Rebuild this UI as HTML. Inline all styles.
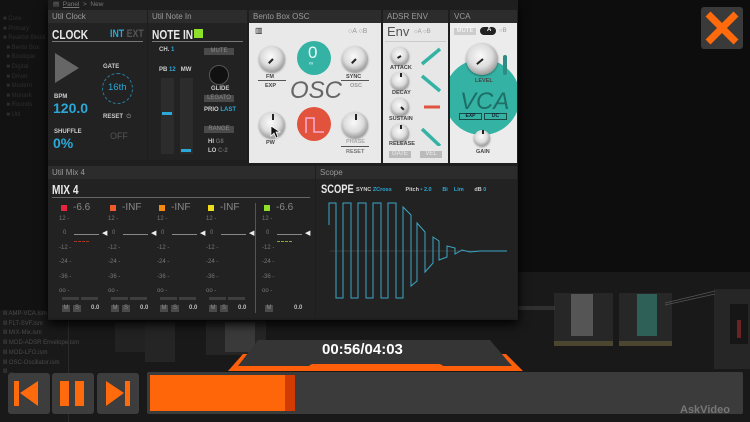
<!DOCTYPE html>
<html><head><meta charset="utf-8"><style>
*{margin:0;padding:0;box-sizing:border-box}
body{width:750px;height:422px;overflow:hidden;background:#0d0d0d;font-family:"Liberation Sans",sans-serif;position:relative}
.a{position:absolute}
.t{position:absolute;white-space:nowrap}
.hd{position:absolute;height:13px;background:#2c2c2c;color:#9a9a9a;font-size:8px;line-height:13px;padding-left:4px}
.dk{background:#222}
.w{color:#e8e8e8;font-weight:bold;transform:scaleX(.78);transform-origin:0 0}
.bl{color:#2aa8d8;font-weight:bold}
.sm{font-size:6px;font-weight:bold;color:#ccc}
.btn{position:absolute;background:#4a4a4a;color:#888;font-size:6px;text-align:center;line-height:7px}
.knob{position:absolute;border-radius:50%;background:radial-gradient(circle at 45% 40%,#fafafa 0,#ddd 45%,#999 75%,#777 100%);box-shadow:0 1px 2px #0006}
.knob i{position:absolute;left:50%;top:50%;width:2px;height:6px;background:#222;transform-origin:50% 0}
.lw{font-size:5.5px;font-weight:bold;color:#444;position:absolute;white-space:nowrap}
.mx{font-size:6px;color:#777;position:absolute}
</style></head><body>
<div class="a" style="left:0;top:272px;width:750px;height:150px;background:#191919"></div>
<div class="a" style="left:0;top:0;width:48px;height:310px;background:#121212"></div>
<div class="t" style="left:3px;top:15px;font-size:6px;color:#2e2e2e;line-height:9.6px">■ Core<br>■ Primary<br>■ Reaktor Block<br>&nbsp;&nbsp;■ Bento Box<br>&nbsp;&nbsp;■ Boutique<br>&nbsp;&nbsp;■ Digital<br>&nbsp;&nbsp;■ Driver<br>&nbsp;&nbsp;■ Modern<br>&nbsp;&nbsp;■ Monark<br>&nbsp;&nbsp;■ Rounds<br>&nbsp;&nbsp;■ Util</div>
<div class="t" style="left:3px;top:310px;font-size:6px;color:#4a4a4a;line-height:9.7px">Ⅲ AMP-VCA.ism<br>Ⅲ FLT-SVF.ism<br>Ⅲ MIX-Mix.ism<br>Ⅲ MOD-ADSR Envelope.ism<br>Ⅲ MOD-LFO.ism<br>Ⅲ OSC-Oscillator.ism<br>Ⅲ ...</div>
<div class="a" style="left:68px;top:300px;width:1px;height:122px;background:#2a2a2a"></div>
<div class="a" style="left:115px;top:322px;width:38px;height:30px;background:#222"></div>
<div class="a" style="left:145px;top:322px;width:30px;height:40px;background:#252525"></div>
<div class="a" style="left:206px;top:320px;width:60px;height:35px;background:#252525"></div>
<div class="a" style="left:225px;top:322px;width:30px;height:30px;background:#3a3a3a"></div>
<div class="a" style="left:554px;top:293px;width:59px;height:52px;background:#272727"></div>
<div class="a" style="left:571px;top:294px;width:22px;height:42px;background:#555"></div>
<div class="a" style="left:554px;top:341px;width:59px;height:5px;background:#4a4630"></div>
<div class="a" style="left:619px;top:293px;width:53px;height:52px;background:#272727"></div>
<div class="a" style="left:637px;top:294px;width:20px;height:42px;background:#2f6058"></div>
<div class="a" style="left:619px;top:341px;width:53px;height:5px;background:#4a4630"></div>
<div class="a" style="left:714px;top:289px;width:36px;height:80px;background:#262626"></div>
<div class="a" style="left:730px;top:304px;width:18px;height:40px;background:#161616"></div>
<div class="a" style="left:737px;top:320px;width:4px;height:18px;background:#6a2222"></div>
<svg class="a" style="left:515px;top:290px" width="210" height="30"><path d="M0 17 L40 17 M0 19 L40 19 M150 15 L200 4 M150 13 L200 1" stroke="#555" fill="none" stroke-width=".7"/></svg>

<div class="a" style="left:48px;top:0;width:470px;height:320px;background:#1e1e1e;box-shadow:0 4px 10px #000"></div>
<div class="t" style="left:53px;top:0;font-size:6.5px;color:#777">▤ &nbsp;<u>Panel</u> &nbsp;&gt;&nbsp; New</div>
<div class="hd" style="left:48px;top:10px;width:99px">Util Clock</div>
<div class="a dk" style="left:48px;top:23px;width:99px;height:137px"></div>
<div class="t w" style="left:52px;top:27px;font-size:13px">CLOCK</div>
<div class="t" style="left:110px;top:28px;font-size:11px;font-weight:bold;transform:scaleX(.8);transform-origin:0 0"><span style="color:#2aa8d8">INT</span> <span style="color:#555">EXT</span></div>
<div class="a" style="left:52px;top:41px;width:91px;height:1px;background:#777"></div>
<div class="a" style="left:55px;top:53px;width:0;height:0;border-left:24px solid #666;border-top:15px solid transparent;border-bottom:15px solid transparent"></div>
<div class="t sm" style="left:103px;top:64px">GATE</div>
<div class="a" style="left:102px;top:73px;width:31px;height:31px;border:1.5px dashed #2a7da0;border-radius:50%"></div>
<div class="t" style="left:108px;top:82px;font-size:9.5px;color:#2aa8d8">16th</div>
<div class="t sm" style="left:54px;top:94px">BPM</div>
<div class="t bl" style="left:53px;top:100px;font-size:14px">120.0</div>
<div class="t sm" style="left:103px;top:114px">RESET &nbsp;<span style="color:#777">⏻</span></div>
<div class="t sm" style="left:54px;top:129px">SHUFFLE</div>
<div class="t bl" style="left:53px;top:135px;font-size:14px">0%</div>
<div class="t" style="left:110px;top:131px;font-size:9px;color:#555">OFF</div>
<div class="hd" style="left:148px;top:10px;width:99px">Util Note In</div>
<div class="a dk" style="left:148px;top:23px;width:99px;height:137px"></div>
<div class="t w" style="left:152px;top:27px;font-size:13px">NOTE IN</div>
<div class="a" style="left:194px;top:29px;width:9px;height:9px;background:#8ee02a"></div>
<div class="a" style="left:152px;top:41px;width:91px;height:1px;background:#777"></div>
<div class="t sm" style="left:159px;top:47px">CH. <span style="color:#2aa8d8">1</span></div>
<div class="btn" style="left:204px;top:48px;width:30px">MUTE</div>
<div class="t sm" style="left:159px;top:67px">PB <span style="color:#2aa8d8">12</span> &nbsp; MW</div>
<div class="a" style="left:161px;top:78px;width:13px;height:76px;background:#2c2c2c"></div>
<div class="a" style="left:180px;top:78px;width:13px;height:76px;background:#2c2c2c"></div>
<div class="a" style="left:162px;top:112px;width:10px;height:3px;background:#2aa8d8"></div>
<div class="a" style="left:181px;top:149px;width:10px;height:3px;background:#2aa8d8"></div>
<div class="a" style="left:209px;top:65px;width:20px;height:20px;border-radius:50%;background:#111;border:1.5px solid #555"></div>
<div class="t sm" style="left:211px;top:86px">GLIDE</div>
<div class="btn" style="left:204px;top:95px;width:30px">LEGATO</div>
<div class="t sm" style="left:204px;top:107px">PRIO <span style="color:#2aa8d8">LAST</span></div>
<div class="btn" style="left:204px;top:126px;width:30px">RANGE</div>
<div class="t sm" style="left:208px;top:138px;line-height:9px">HI <span style="color:#666">G8</span><br>LO <span style="color:#666">C-2</span></div>
<div class="hd" style="left:249px;top:10px;width:132px">Bento Box OSC</div>
<div class="a" style="left:249px;top:23px;width:132px;height:140px;background:#e9e9e9"></div>
<div class="t" style="left:255px;top:26px;font-size:8px;color:#222">▥</div>
<div class="t" style="left:348px;top:28px;font-size:7px;color:#999">○A ○B</div>
<div class="knob" style="left:259px;top:46px;width:26px;height:26px"><i style="transform:rotate(45deg)"></i></div>
<div class="lw" style="left:266px;top:74px">FM</div><div class="a" style="left:258px;top:80px;width:28px;height:1px;background:#555"></div><div class="lw" style="left:265px;top:83px">EXP</div>
<div class="a" style="left:297px;top:41px;width:34px;height:34px;border-radius:50%;background:#34b3a5"></div>
<div class="t" style="left:308px;top:43px;font-size:17px;color:#e8fffb">0</div>
<div class="t" style="left:309px;top:61px;font-size:6px;color:#e8fffb">∞</div>
<div class="knob" style="left:342px;top:46px;width:26px;height:26px"><i style="transform:rotate(45deg)"></i></div>
<div class="lw" style="left:346px;top:74px">SYNC</div><div class="a" style="left:341px;top:80px;width:28px;height:1px;background:#555"></div><div class="lw" style="left:350px;top:83px;color:#999">OSC</div>
<div class="t" style="left:290px;top:77px;font-size:24px;color:#666;font-style:italic">OSC</div>
<div class="knob" style="left:259px;top:112px;width:26px;height:26px"><i style="transform:rotate(180deg);top:30%"></i></div>
<div class="lw" style="left:266px;top:140px">PW</div>
<div class="a" style="left:297px;top:107px;width:34px;height:34px;border-radius:50%;background:#e2533e"></div>
<svg class="a" style="left:305px;top:115px" width="20" height="20"><path d="M1 18 L1 3 L9 3 L9 17 L19 17" stroke="#fbe" fill="none" stroke-width="1.3"/></svg>
<div class="knob" style="left:342px;top:112px;width:26px;height:26px"><i style="transform:rotate(180deg);top:30%"></i></div>
<div class="lw" style="left:346px;top:139px;color:#aaa">PHASE</div><div class="a" style="left:341px;top:146px;width:28px;height:1px;background:#555"></div><div class="lw" style="left:346px;top:149px;color:#777">RESET</div>
<svg class="a" style="left:270px;top:125px" width="12" height="14"><path d="M1 1 L1 11 L4 8 L6 13 L8 12 L6 7 L10 7 Z" fill="#111" stroke="#fff" stroke-width=".7"/></svg>
<div class="hd" style="left:383px;top:10px;width:65px">ADSR ENV</div>
<div class="a" style="left:383px;top:23px;width:65px;height:140px;background:#e7e7e7"></div>
<div class="t" style="left:387px;top:24px;font-size:13px;color:#555">Env</div>
<div class="t" style="left:414px;top:29px;font-size:6px;color:#999">○A ○B</div>
<div class="a" style="left:385px;top:41px;width:61px;height:1px;background:#ccc"></div>
<div class="knob" style="left:391px;top:47px;width:18px;height:18px"><i style="height:4px;transform:rotate(60deg)"></i></div><div class="lw" style="left:390px;top:65px">ATTACK</div>
<div class="knob" style="left:391px;top:72px;width:18px;height:18px"><i style="height:4px;transform:rotate(180deg);top:25%"></i></div><div class="lw" style="left:392px;top:90px">DECAY</div>
<div class="knob" style="left:391px;top:98px;width:18px;height:18px"><i style="height:4px;transform:rotate(-45deg)"></i></div><div class="lw" style="left:389px;top:116px">SUSTAIN</div>
<div class="knob" style="left:391px;top:124px;width:18px;height:18px"><i style="height:4px;transform:rotate(180deg);top:25%"></i></div><div class="lw" style="left:389px;top:141px">RELEASE</div>
<svg class="a" style="left:420px;top:46px" width="24" height="100"><path d="M2 18 L20 3 M2 30 L20 45 M2 83 L20 100" stroke="#34b3a5" stroke-width="3.5"/><path d="M4 61 L20 61" stroke="#e2533e" stroke-width="3"/></svg>
<div class="btn" style="left:389px;top:151px;width:22px;background:#bbb;color:#eee">GATE</div>
<div class="btn" style="left:420px;top:151px;width:22px;background:#bbb;color:#eee">VEL</div>
<div class="hd" style="left:450px;top:10px;width:67px">VCA</div>
<div class="a" style="left:450px;top:23px;width:67px;height:140px;background:#ececec;overflow:hidden"><div class="a" style="left:-6px;top:36px;width:76px;height:76px;border-radius:50%;background:#34b3a5"></div></div>
<div class="btn" style="left:454px;top:28px;width:22px;background:#ccc;color:#fff">MUTE</div>
<div class="a" style="left:480px;top:27px;width:16px;height:8px;border-radius:4px;background:#222"></div>
<div class="t" style="left:487px;top:27px;font-size:6px;color:#fff;font-weight:bold">A</div>
<div class="t" style="left:499px;top:28px;font-size:6px;color:#999">○B</div>
<div class="knob" style="left:466px;top:43px;width:32px;height:32px"><i style="height:8px;transform:rotate(50deg)"></i></div>
<div class="a" style="left:503px;top:55px;width:4px;height:20px;background:#2f8c82;border-radius:2px"></div>
<div class="lw" style="left:475px;top:78px">LEVEL</div>
<div class="t" style="left:460px;top:88px;font-size:24px;color:#1d6e66;font-style:italic">VCA</div>
<div class="a" style="left:459px;top:113px;width:23px;height:7px;border:1px solid #1a4a45;font-size:5px;text-align:center;color:#123;font-weight:bold;line-height:5px">EXP</div>
<div class="a" style="left:484px;top:113px;width:23px;height:7px;border:1px solid #1a4a45;font-size:5px;text-align:center;color:#123;font-weight:bold;line-height:5px">DC</div>
<div class="knob" style="left:474px;top:130px;width:16px;height:16px"><i style="height:4px;transform:rotate(180deg);top:25%"></i></div>
<div class="lw" style="left:476px;top:149px">GAIN</div>

<div class="hd" style="left:48px;top:166px;width:267px">Util Mix 4</div>
<div class="a dk" style="left:48px;top:179px;width:267px;height:139px"></div>
<div class="t w" style="left:52px;top:182px;font-size:13px">MIX 4</div>
<div class="a" style="left:52px;top:197px;width:258px;height:1px;background:#666"></div>
<div class="a" style="left:255px;top:203px;width:1px;height:110px;background:#555"></div>
<div id="ch"></div>
<div class="hd" style="left:316px;top:166px;width:201px">Scope</div>
<div class="a dk" style="left:316px;top:179px;width:201px;height:139px"></div>
<div class="t w" style="left:321px;top:182px;font-size:12px">SCOPE</div>
<div class="t sm" style="left:356px;top:187px;font-size:5.5px">SYNC <span style="color:#2aa8d8">ZCross</span> &nbsp; &nbsp; &nbsp; &nbsp; Pitch <span style="color:#2aa8d8">• 2.0</span> &nbsp; &nbsp; &nbsp; <span style="color:#2aa8d8">Bi &nbsp; &nbsp;Lim</span> &nbsp; &nbsp; &nbsp; dB <span style="color:#2aa8d8">0</span></div>
<svg class="a" style="left:316px;top:179px" width="201" height="139"><path d="M14 72 L190 72" stroke="#555" stroke-width=".6"/>
<polyline transform="translate(-316,-179)" fill="none" stroke="#3aa6c4" stroke-width="1" points="329,225 329,203 336,203 336,298 343,298 343,203 351,203 351,298 358,298 358,203 366,203 366,298 373,298 373,203 381,203 381,298 388,298 388,203 396,203 396,298 403,298 403,207 411,215 411,286 417,281 417,223 425,232 425,272 433,263 433,237 439,241 439,260 447,257 447,246 455,248 455,254 462,250 470,252 480,251 507,251"/></svg>

<div class="a" style="left:701px;top:7px;width:42px;height:42px;background:#3a3a3a;border-radius:3px"></div>
<svg class="a" style="left:701px;top:7px" width="42" height="42"><path d="M7 7 L35 35 M35 7 L7 35" stroke="#ff6a0d" stroke-width="7"/></svg>

<svg class="a" style="left:0;top:330px" width="750" height="50"><path d="M228 41 L243 24 L256 24 L246 36 L505 36 L494 24 L506 24 L523 41 Z" fill="#ff5e0b"/><path d="M238 36 L258 10 L490 10 L512 36 Z" fill="#353535"/><path d="M300 41 L312 34 L440 34 L452 41 Z" fill="#ff5e0b"/></svg>
<div class="t" style="left:322px;top:341px;font-size:15px;color:#fff;font-weight:bold">00:56/04:03</div>
<div class="a" style="left:8px;top:373px;width:42px;height:41px;background:#3d3d3d;border-radius:3px"></div>
<div class="a" style="left:52px;top:373px;width:42px;height:41px;background:#3d3d3d;border-radius:3px"></div>
<div class="a" style="left:97px;top:373px;width:42px;height:41px;background:#3d3d3d;border-radius:3px"></div>
<svg class="a" style="left:0;top:373px" width="140" height="41"><path d="M14 8 L19 8 L19 33 L14 33 Z M20 20 L38 8 L38 33 Z" fill="#ff6a0d"/><path d="M60 8 L69 8 L69 33 L60 33 Z M75 8 L84 8 L84 33 L75 33 Z" fill="#ff6a0d"/><path d="M106 8 L124 20 L106 33 Z M125 8 L130 8 L130 33 L125 33 Z" fill="#ff6a0d"/></svg>
<div class="a" style="left:147px;top:372px;width:596px;height:42px;background:#3b3b3b;border-radius:2px"></div>
<div class="a" style="left:150px;top:375px;width:139px;height:36px;background:#ff660a"></div>
<div class="a" style="left:285px;top:375px;width:10px;height:36px;background:#d13c05"></div>
<div class="t" style="left:680px;top:404px;font-size:11px;color:#777;font-weight:bold">AskVideo</div>
<script>
var c=['#e8243c','#ef5a2b','#f28a12','#eedc1c','#8ee02a'],v=['-6.6','-INF','-INF','-INF','-6.6'],x=[61,110,159,208,264],h='';
for(var i=0;i<5;i++){var X=x[i];
h+='<div class="a" style="left:'+X+'px;top:205px;width:6px;height:6px;background:'+c[i]+'"></div><div class="t" style="left:'+(X+12)+'px;top:202px;font-size:10px;color:#888">'+v[i]+'</div>';
var lb=['12 -','0','-12 -','-24 -','-36 -','oo -'],ly=[216,230,245,259,274,288];
for(var j=0;j<6;j++)h+='<div class="mx" style="left:'+(X-2+(j==1?4:0))+'px;top:'+ly[j]+'px">'+lb[j]+'</div>';
h+='<div class="a" style="left:'+(X+13)+'px;top:234px;width:25px;height:1px;background:#888"></div><div class="t" style="left:'+(X+41)+'px;top:229px;font-size:7px;color:#eee">◀</div>';
if(i==0||i==4)h+='<div class="a" style="left:'+(X+13)+'px;top:241px;width:15px;height:1px;border-top:1px dashed '+(i==0?'#a32':'#8a3')+'"></div>';
if(i<4)h+='<div class="a" style="left:'+(X+1)+'px;top:297px;width:17px;height:3px;background:#3e3e3e"></div><div class="a" style="left:'+(X+20)+'px;top:297px;width:17px;height:3px;background:#3e3e3e"></div>';
h+='<div class="btn" style="left:'+(X+1)+'px;top:305px;width:8px;height:7px">M</div>';
if(i<4)h+='<div class="btn" style="left:'+(X+12)+'px;top:305px;width:8px;height:7px">S</div>';
h+='<div class="t" style="left:'+(X+30)+'px;top:305px;font-size:6px;color:#bbb;font-weight:bold">0.0</div>';}
document.getElementById('ch').outerHTML=h;
</script>
</body></html>
